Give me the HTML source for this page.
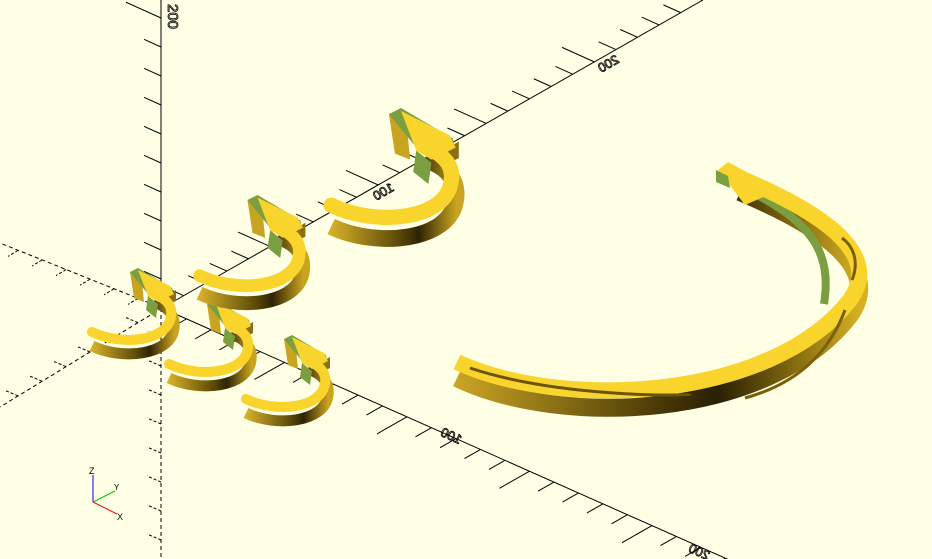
<!DOCTYPE html>
<html><head><meta charset="utf-8"><style>
html,body{margin:0;padding:0;background:#ffffe5;width:932px;height:559px;overflow:hidden;}
svg{display:block;}
text{font-family:"Liberation Sans",sans-serif;}
</style></head><body>
<svg id="s" width="932" height="559" viewBox="0 0 932 559" xmlns="http://www.w3.org/2000/svg">
<defs>
<linearGradient id="sd" x1="0" x2="1" y1="0" y2="0">
<stop offset="0" stop-color="#d6b02a"/><stop offset="0.55" stop-color="#5a4808"/><stop offset="0.7" stop-color="#2e2404"/><stop offset="1" stop-color="#c9a420"/>
</linearGradient>
<linearGradient id="sd2" x1="0" x2="1" y1="0" y2="0">
<stop offset="0" stop-color="#c9a424"/><stop offset="0.5" stop-color="#4a3a06"/><stop offset="0.65" stop-color="#2a2003"/><stop offset="0.85" stop-color="#8a6e10"/><stop offset="1" stop-color="#d4b024"/>
</linearGradient>
</defs>
<g id="axes" stroke="#000" stroke-width="1" fill="none">
<line x1="161" y1="0" x2="161" y2="308"/>
<line x1="161" y1="308" x2="161" y2="559" stroke-dasharray="4,3"/>
<line x1="162" y1="308" x2="932" y2="650"/>
<line x1="162" y1="308" x2="703" y2="0"/>
<line x1="162" y1="308" x2="0" y2="243" stroke-dasharray="4,3"/>
<line x1="162" y1="308" x2="0" y2="407" stroke-dasharray="4,3"/>
</g>
<g id="ticks" stroke="#000" stroke-width="1"></g>
<g fill="none" stroke="#000" stroke-width="1">
<text x="0" y="0" transform="translate(168,4) rotate(90)" font-size="15" fill="none" stroke="#000" stroke-width="0.8">200</text>
<text x="0" y="0" transform="translate(395,190) rotate(-30) scale(1,-1) rotate(180)" font-size="13" fill="none" stroke="#000" stroke-width="0.8">100</text>
<text x="0" y="0" transform="translate(620,62) rotate(-30) scale(1,-1) rotate(180)" font-size="13" fill="none" stroke="#000" stroke-width="0.8">200</text>
<text x="0" y="0" transform="translate(432,432) rotate(24) scale(1,-1) rotate(180) translate(-30,0)" font-size="13" fill="none" stroke="#000" stroke-width="0.8">100</text>
<text x="0" y="0" transform="translate(680,548) rotate(24) scale(1,-1) rotate(180) translate(-30,0)" font-size="13" fill="none" stroke="#000" stroke-width="0.8">200</text>
</g>

<g id="hooks"></g>

<g>
<path d="M457,368 C560,418 770,410 850,305 C880,262 835,222 740,182" fill="none" stroke="url(#sd2)" stroke-width="18" transform="translate(0,10)"/>
<path d="M740,180 C820,215 838,250 830,300" fill="none" stroke="#7a9e40" stroke-width="8" transform="translate(-6,4)"/>
<path d="M457,362 C560,410 770,402 850,300 C880,258 835,218 740,178" fill="none" stroke="#f8d42c" stroke-width="16"/>
<path d="M470,368 C560,398 690,396 690,394" fill="none" stroke="#6b5408" stroke-width="3"/>
<path d="M745,398 C800,383 830,350 845,310 M852,280 C860,260 852,245 842,238" fill="none" stroke="#7a5f0a" stroke-width="3"/>
<path d="M718,170 L728,162 L765,182 L768,195 L745,205 Z" fill="#f8d42c"/>
<path d="M716,170 L728,176 L730,188 L716,182 Z" fill="#7a9e40"/>
</g>

<g id="axsym" font-size="9" fill="#000">
<line x1="93" y1="502" x2="93" y2="475" stroke="#0000ff"/>
<line x1="93" y1="502" x2="115" y2="491" stroke="#00cc00"/>
<line x1="93" y1="502" x2="117" y2="514" stroke="#ff0000"/>
<text x="89" y="474">Z</text><text x="114" y="490" font-size="8">Y</text><text x="117" y="520">X</text>
</g>
</svg>
<script>
(function(){
var t=document.getElementById('ticks'),h='';
function L(a,b,c,d,dash){h+='<line x1="'+a+'" y1="'+b+'" x2="'+c+'" y2="'+d+'"'+(dash?' stroke-dasharray="3,2"':'')+'/>';}
for(var y=18;y<300;y+=29){var l=(y==18)?35:17;L(161,y,161-l,y-l*0.45);}
for(var y=337;y<559;y+=29){L(161,y,147,y-6,true);}
for(var i=1;i<32;i++){var x=162+i*24.5,y=308+(x-162)*0.444;var l=(i%5==0)?30:16;L(x,y,x-l,y+l*0.57);}
for(var i=1;i<26;i++){var x=162+i*21.6,y=308-(x-162)*0.57;var l=(i%5==0)?32:17;L(x,y,x-l,y-l*0.45);}
for(var i=1;i<7;i++){var x=162-i*24,y=308-i*24*0.4;L(x,y,x-10,y+6,true);}
for(var i=1;i<7;i++){var x=162-i*24,y=308+i*24*0.61;L(x,y,x-12,y-5,true);}
t.innerHTML=h;
var hooks=[[86,268,1],[163,300,1],[240,335,1],[192,195,1.26],[322,108,1.52]],g='';
hooks.forEach(function(k){
var tr='translate('+k[0]+','+k[1]+') scale('+k[2]+')';
g+='<g transform="'+tr+'">'+
'<path d="M6,70 C35,84 85,80 88,52 C90,38 80,30 68,26" fill="none" stroke="url(#sd)" stroke-width="11" transform="translate(0,8)"/>'+
'<path d="M62,28 L60,42 L70,50 L72,36 Z" fill="#7a9e40"/>'+
'<path d="M44,4 L56,14 L58,34 L48,30 Z" fill="#c9a420"/>'+
'<path d="M44,4 L52,0 L86,20 L88,30 L78,36 L62,26 Z" fill="#7a9e40"/>'+
'<path d="M80,28 L90,22 L90,33 L80,38 Z" fill="#8a7010"/>'+
'<path d="M6,64 C35,78 82,74 85,48 C87,36 78,30 66,24" fill="none" stroke="#f8d42c" stroke-width="10" stroke-linecap="round"/>'+
'<path d="M52,2 L84,18 L88,26 L72,34 L62,28 Z" fill="#f8d42c"/>'+
'</g>';});
document.getElementById('hooks').innerHTML=g;
})();
</script>
</body></html>
